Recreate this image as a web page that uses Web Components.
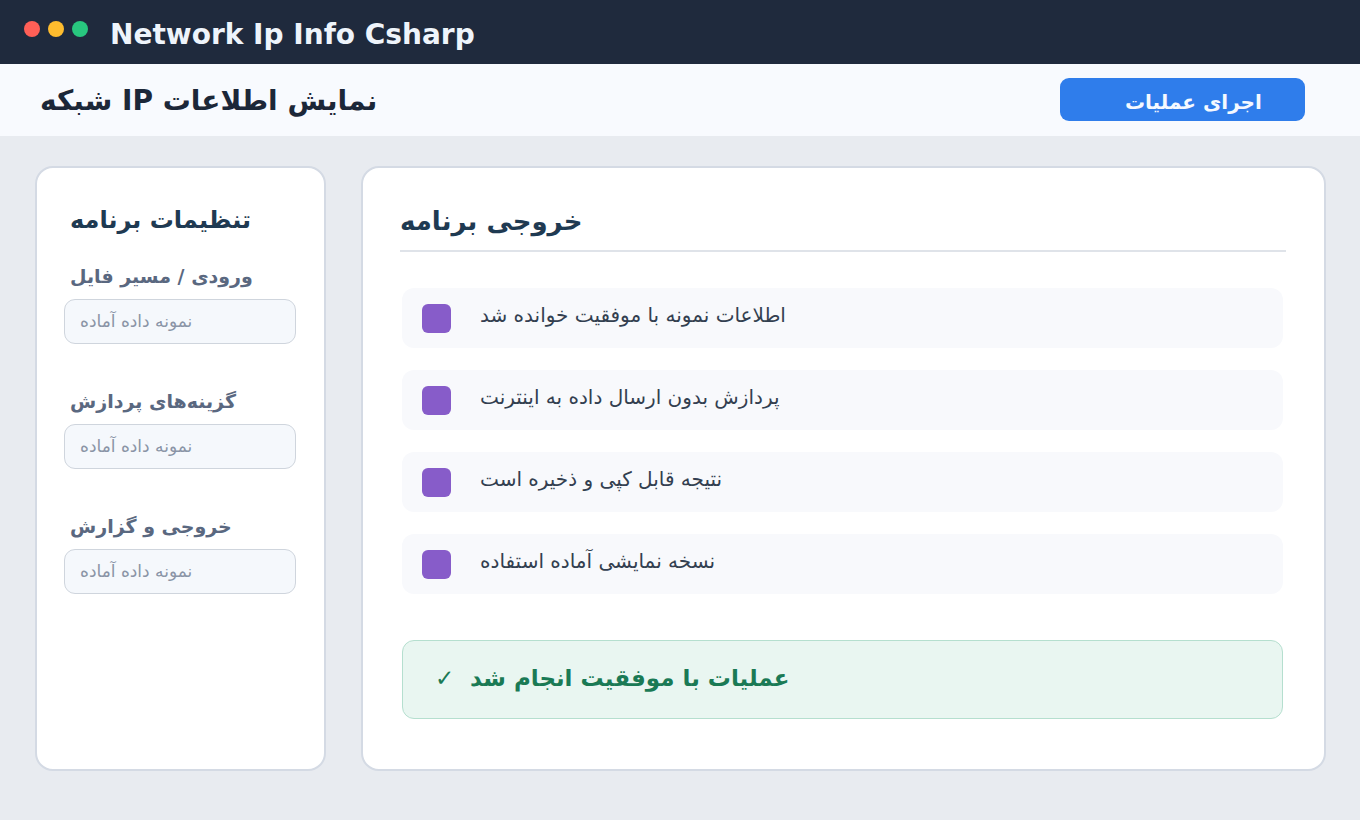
<!DOCTYPE html>
<html lang="fa">
<head>
<meta charset="utf-8">
<title>Network Ip Info Csharp</title>
<style>
    html, body { margin: 0; height: 100%; }
    body { background: #e8ebf0; font-family: "DejaVu Sans", sans-serif; overflow: hidden; }
</style>
</head>
<body>

<title-bar>Network Ip Info Csharp</title-bar>
<tool-bar action="اجرای عملیات">نمایش اطلاعات IP شبکه</tool-bar>
<app-content>
    <settings-panel heading="تنظیمات برنامه">
        <field-group label="ورودی / مسیر فایل">نمونه داده آماده</field-group>
        <field-group label="گزینه‌های پردازش">نمونه داده آماده</field-group>
        <field-group label="خروجی و گزارش">نمونه داده آماده</field-group>
    </settings-panel>
    <output-panel heading="خروجی برنامه">
        <output-row>اطلاعات نمونه با موفقیت خوانده شد</output-row>
        <output-row>پردازش بدون ارسال داده به اینترنت</output-row>
        <output-row>نتیجه قابل کپی و ذخیره است</output-row>
        <output-row>نسخه نمایشی آماده استفاده</output-row>
        <status-box slot="status">عملیات با موفقیت انجام شد</status-box>
    </output-panel>
</app-content>

<script>

    // small helper so every element below stays a few lines
    function define(name, css, html, attrs) {
        customElements.define(name, class extends HTMLElement {
            constructor() {
                super();
                let shadowRoot = this.attachShadow({mode: 'open'});
                shadowRoot.innerHTML = '<style>' + css + '</style>' + html;
            }
            connectedCallback() {
                (attrs || []).forEach(attr => {
                    this.shadowRoot.querySelector('[data-' + attr + ']').textContent = this.getAttribute(attr);
                });
            }
        });
    }

    define('title-bar', `
        :host { display: flex; align-items: center; height: 64px; padding-left: 24px; box-sizing: border-box; background: #1f2a3d; }
        .dots { display: flex; gap: 8px; margin-top: -6px; }
        .dots i { width: 16px; height: 16px; border-radius: 50%; }
        .title { margin: 5px 0 0 22px; font-size: 28px; font-weight: 700; color: #eef4fb; white-space: nowrap; }
    `, `
        <div class="dots">
            <i style="background:#ff5f57"></i><i style="background:#febc2e"></i><i style="background:#28c77f"></i>
        </div>
        <div class="title"><slot></slot></div>
    `);

    define('tool-bar', `
        :host { display: flex; align-items: center; justify-content: space-between; height: 72px; padding: 0 55px 0 40px; box-sizing: border-box; background: #f8fafe; }
        .title { direction: rtl; font-size: 28px; font-weight: 700; color: #1c2738; white-space: nowrap; }
        .btn { direction: rtl; width: 245px; height: 43px; margin-top: -1px; box-sizing: border-box; padding-left: 65px; border-radius: 9px; background: #2f7deb; color: #f5f9ff; font-size: 20px; font-weight: 700; line-height: 48px; text-align: left; }
    `, `
        <div class="title"><slot></slot></div>
        <div class="btn" data-action></div>
    `, ['action']);

    define('app-content', `
        :host { display: flex; gap: 35px; padding: 30px 35px 0 35px; }
    `, `<slot></slot>`);

    define('settings-panel', `
        :host { display: block; flex: none; width: 291px; height: 605px; box-sizing: border-box; padding: 37px 28px 0 27px; background: #fff; border: 2px solid #d4dae4; border-radius: 18px; }
        h2 { direction: rtl; margin: 0 0 29px 6px; font-size: 24px; line-height: 30px; font-weight: 700; color: #1f3a52; text-align: left; }
        .list { display: flex; flex-direction: column; gap: 45px; }
    `, `
        <h2 data-heading></h2>
        <div class="list"><slot></slot></div>
    `, ['heading']);

    define('field-group', `
        :host { display: block; }
        .label { direction: rtl; margin: 0 0 11px 6px; font-size: 19px; line-height: 24px; font-weight: 700; color: #5a6880; text-align: left; }
        .input { direction: rtl; height: 45px; box-sizing: border-box; padding-left: 15px; background: #f5f8fc; border: 1px solid #cfd5dd; border-radius: 11px; color: #8a94a6; font-size: 17px; line-height: 42px; text-align: left; }
    `, `
        <div class="label" data-label></div>
        <div class="input"><slot></slot></div>
    `, ['label']);

    define('output-panel', `
        :host { display: block; flex: none; width: 965px; height: 605px; box-sizing: border-box; padding: 37px 38px 0 37px; background: #fff; border: 2px solid #d4dae4; border-radius: 18px; }
        h2 { direction: rtl; margin: 0; height: 45px; border-bottom: 2px solid #dfe3e9; font-size: 26px; line-height: 32px; font-weight: 700; color: #1f3a52; text-align: left; }
        .rows { display: flex; flex-direction: column; gap: 22px; margin: 36px 3px 0 2px; }
        .status { display: block; margin: 46px 3px 0 2px; }
    `, `
        <h2 data-heading></h2>
        <div class="rows"><slot></slot></div>
        <div class="status"><slot name="status"></slot></div>
    `, ['heading']);

    define('output-row', `
        :host { display: flex; align-items: center; height: 60px; padding-left: 20px; background: #f8f9fc; border-radius: 12px; }
        .mark { flex: none; width: 29px; height: 29px; background: #875cc9; border-radius: 6px; }
        .text { direction: rtl; margin: -7px 0 0 29px; font-size: 20px; color: #333f50; white-space: nowrap; }
    `, `
        <div class="mark"></div>
        <div class="text"><slot></slot></div>
    `);

    define('status-box', `
        :host { display: flex; align-items: center; height: 79px; box-sizing: border-box; padding-left: 32px; background: #e9f6f1; border: 1px solid #b5dfcf; border-radius: 12px; color: #1a7a55; }
        .check { margin-top: -3px; font-size: 23px; width: 35px; flex: none; }
        .text { direction: rtl; margin-top: -3px; font-size: 23px; font-weight: 700; white-space: nowrap; }
    `, `
        <div class="check">✓</div>
        <div class="text"><slot></slot></div>
    `);

</script>
</body>
</html>
